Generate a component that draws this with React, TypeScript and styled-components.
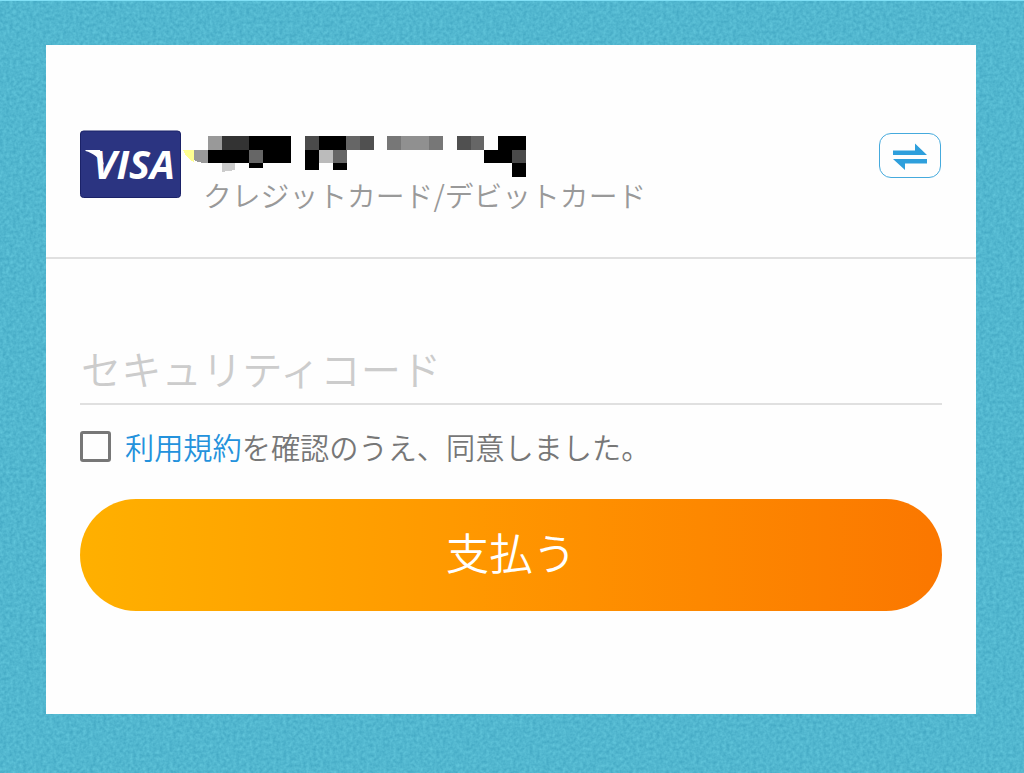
import { useState } from "react";
import styled, { createGlobalStyle } from "styled-components";

const GlobalStyle = createGlobalStyle`
    * {
        box-sizing: border-box;
    }

    body {
        margin: 0;
        background: #53b7d0;
        font-family: "Noto Sans CJK JP", sans-serif;
        font-weight: 350;
    }
`;

const Page = styled.div`
    position: relative;
    width: 1024px;
    height: 773px;
    padding: 44px 48px 59px 46px;
    border-top: 1px solid #7fe0f6;
    background: #53b7d0;
    overflow: hidden;
`;

const Grain = styled.svg`
    position: absolute;
    inset: 0;
    width: 100%;
    height: 100%;
    opacity: 0.3;
`;

const Card = styled.main`
    position: relative;
    height: 669px;
    background: #fefefe;
`;

const CardHeader = styled.header`
    display: flex;
    align-items: flex-start;
    height: 214px;
    padding: 85px 35px 0 34px;
    border-bottom: 2px solid #e0e0e0;
`;

const BrandLogo = styled.svg`
    display: block;
    flex: none;
    width: 101px;
    height: 68px;
`;

const CardInfo = styled.div`
    display: flex;
    flex-direction: column;
    flex: 1;
`;

const MaskedNumber = styled.svg`
    display: block;
    width: 350px;
    height: 46px;
    margin-top: 1px;
`;

const CardType = styled.p`
    margin: 0 0 0 22px;
    color: #999;
    font-size: 28.8px;
    line-height: 36px;
    white-space: nowrap;
`;

const SwitchButton = styled.button`
    display: flex;
    align-items: center;
    justify-content: center;
    width: 62px;
    height: 45px;
    margin-top: 3px;
    padding: 0;
    border: 1.5px solid #45aadd;
    border-radius: 12px;
    background: transparent;
`;

const Form = styled.form`
    display: flex;
    flex-direction: column;
    padding: 77px 34px 0;
`;

const CodeInput = styled.input`
    width: 100%;
    height: 69px;
    padding: 0 0 5px 1px;
    border: 0;
    border-bottom: 2px solid #e0e0e0;
    outline: 0;
    background: transparent;
    color: #666;
    font: inherit;
    font-size: 40.3px;

    &::placeholder {
        color: #ccc;
        opacity: 1;
    }
`;

const Terms = styled.label`
    display: flex;
    align-items: center;
    height: 44px;
    margin-top: 19px;
    color: #777;
    font-size: 29.2px;
    line-height: 44px;
    white-space: nowrap;

    a {
        color: #2492dc;
        text-decoration: none;
    }
`;

const Checkbox = styled.input`
    appearance: none;
    flex: none;
    width: 31px;
    height: 31px;
    margin: 0 14px 0 0;
    border: 3px solid #777;
    border-radius: 3px;

    &:checked {
        background: #2492dc;
    }
`;

const PayButton = styled.button`
    height: 112px;
    margin-top: 31px;
    padding: 0 0 6px;
    border: 0;
    border-radius: 56px;
    background: linear-gradient(90deg, #ffb000 0%, #ff9800 45%, #fb7700 100%);
    color: #fff;
    font: inherit;
    font-size: 43.5px;
    line-height: 1;
`;

// x, y, width, height, fill
const mosaic: [number, number, number, number, string][] = [
    [27, 5, 14, 14, "#999"],
    [41, 5, 27, 14, "#333"],
    [68, 5, 42, 14, "#000"],
    [13, 19, 14, 13, "#999"],
    [27, 19, 41, 13, "#000"],
    [68, 19, 14, 13, "#666"],
    [82, 19, 28, 13, "#000"],
    [68, 32, 14, 5, "#000"],
    [124, 5, 14, 14, "#4a4a4a"],
    [138, 5, 27, 14, "#000"],
    [165, 5, 14, 14, "#666"],
    [179, 5, 14, 14, "#505050"],
    [124, 19, 14, 20, "#000"],
    [138, 19, 14, 13, "#bbb"],
    [152, 19, 14, 13, "#666"],
    [152, 32, 14, 7, "#000"],
    [206, 5, 14, 14, "#777"],
    [220, 5, 28, 14, "#909090"],
    [248, 5, 14, 14, "#777"],
    [276, 5, 14, 14, "#505050"],
    [290, 5, 13, 14, "#666"],
    [317, 5, 28, 14, "#000"],
    [303, 19, 28, 13, "#000"],
    [331, 19, 14, 13, "#4a4a4a"],
    [331, 32, 14, 14, "#000"],
];

const VisaLogo: React.FC = () => (
    <BrandLogo viewBox="0 0 101 68" role="img" aria-label="VISA">
        <rect x="0.5" y="1" width="100" height="66.5" rx="3" fill="#2b3481" stroke="#1b2268" />
        <path d="M5.5 20H20L24 35C18 27 13 23 5.5 21Z" fill="#fff" />
        <text
            x="13"
            y="48.5"
            fill="#fff"
            fontFamily="Open Sans, sans-serif"
            fontSize="39.5"
            fontWeight="700"
            fontStyle="italic"
            textLength="82"
            lengthAdjust="spacingAndGlyphs"
        >
            VISA
        </text>
    </BrandLogo>
);

const App: React.FC = () => {
    const [code, setCode] = useState("");

    return (
        <Page>
            <GlobalStyle />
            <Grain aria-hidden="true">
                <filter id="grain" colorInterpolationFilters="sRGB">
                    <feTurbulence type="fractalNoise" baseFrequency="0.3" numOctaves="2" seed="4" />
                    <feColorMatrix values="0.5 0 0 0 0.07  0.5 0 0 0 0.47  0.4 0 0 0 0.61  0 0 0 0 1" />
                </filter>
                <rect width="100%" height="100%" filter="url(#grain)" />
            </Grain>
            <Card>
                <CardHeader>
                    <VisaLogo />
                    <CardInfo>
                        <MaskedNumber viewBox="0 0 350 46" shapeRendering="crispEdges">
                            {mosaic.map(([x, y, width, height, fill]) => (
                                <rect key={`${x}-${y}`} x={x} y={y} width={width} height={height} fill={fill} />
                            ))}
                            <path d="M2 19H13V31C8 29 4 24 2 19Z" fill="#ffff91" />
                            <path d="M13 29Q18 32 23 32H13Z" fill="#fefefe" />
                            <path d="M41 32H54V39L41 41Z" fill="#ccc" />
                        </MaskedNumber>
                        <CardType>クレジットカード/デビットカード</CardType>
                    </CardInfo>
                    <SwitchButton type="button" aria-label="カードを変更">
                        <svg width="36" height="28" viewBox="0 0 36 28" fill="#2e9fdc">
                            <path d="M1 8.5H23V1.5L35 13H1Z" />
                            <path d="M35 17V21.5H13V28L1 17Z" />
                        </svg>
                    </SwitchButton>
                </CardHeader>
                <Form onSubmit={(e) => e.preventDefault()}>
                    <CodeInput
                        value={code}
                        onChange={(e) => setCode(e.target.value)}
                        placeholder="セキュリティコード"
                    />
                    <Terms>
                        <Checkbox type="checkbox" />
                        <a href="#">利用規約</a>を確認のうえ、同意しました。
                    </Terms>
                    <PayButton type="submit">支払う</PayButton>
                </Form>
            </Card>
        </Page>
    );
};

export default App;
